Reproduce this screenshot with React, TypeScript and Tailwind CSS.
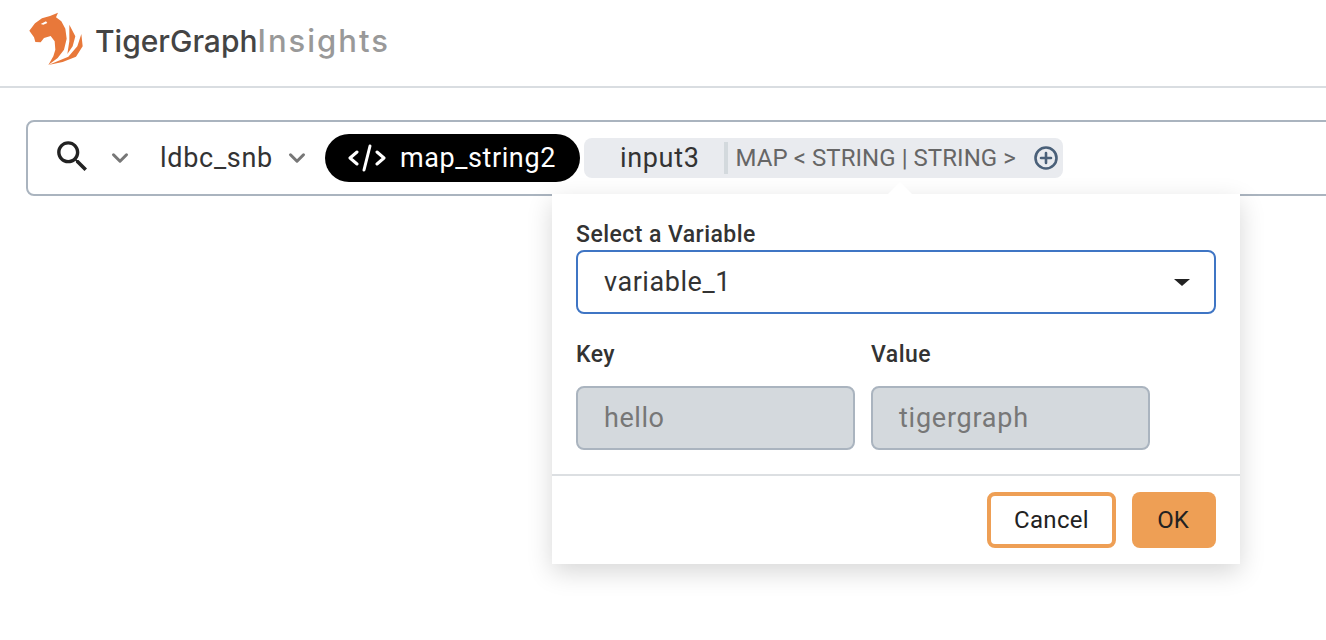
import React from 'react';
import { ChevronDown } from 'lucide-react';

const TigerLogo = () => (
  <svg width="56" height="54" viewBox="27 12 168 162" className="shrink-0">
    <path
      fill="#E8783A"
      d="M28 68 L45 46 L66 31 L90 24 L114 14 L108 28 L124 40 L136 62 L140 92 L132 125 L113 150 L85 171 L100 145 L106 125 L104 100 L92 84 L72 90 L62 103 L46 102 L42 88 Z"
    />
    <path fill="#E8783A" d="M148 50 L166 85 L158 115 L142 138 L148 100 Z" />
    <path fill="#E8783A" d="M184 78 L188 115 L168 146 L128 162 L85 171 L145 146 L172 115 Z" />
    <path fill="#fff" d="M62 48 L78 40 L82 45 L70 50 Z" />
  </svg>
);

const inputText = 'text-[27px] tracking-[0.55px]';

export default function App() {
  return (
    <div className="relative h-[640px] overflow-hidden bg-white font-['Roboto',sans-serif] text-[#222]">
      <header className="flex h-[88px] items-start border-b-2 border-[#d9dde1] pl-[29px] pt-[12px]">
        <TigerLogo />
        <div className="ml-[10px] mt-[9px] whitespace-nowrap font-['Inter',sans-serif] text-[30px] font-medium leading-[40px]">
          <span className="text-[#444]">TigerGraph</span>
          <span className="text-[31px] tracking-[2px] text-[#999]">Insights</span>
        </div>
      </header>

      <div className="ml-[26px] mt-[32px] flex h-[76px] w-[1340px] items-center rounded-[8px] border-2 border-[#aab4bf] pl-[24px]">
        <svg width="41" height="41" viewBox="0 0 24 24" fill="#222" className="mb-[3px] shrink-0">
          <path d="M15.5 14h-.79l-.28-.27C15.41 12.59 16 11.11 16 9.5 16 5.91 13.09 3 9.5 3S3 5.91 3 9.5 5.91 16 9.5 16c1.61 0 3.09-.59 4.23-1.57l.27.28v.79l5 4.99L20.49 19l-4.99-5zm-6 0C7.01 14 5 11.99 5 9.5S7.01 5 9.5 5 14 7.01 14 9.5 11.99 14 9.5 14z" />
        </svg>
        <ChevronDown size={26} strokeWidth={2.8} className="ml-[14px] shrink-0 text-[#777]" />
        <span className="ml-[27px] text-[27px] leading-none tracking-[0.7px] text-[#333]">ldbc_snb</span>
        <ChevronDown size={26} strokeWidth={2.8} className="ml-[11px] shrink-0 text-[#777]" />
        <div className="ml-[15px] flex h-[48px] w-[255px] shrink-0 items-center rounded-full bg-black pl-[23px] text-white">
          <svg width="38" height="28" viewBox="0 0 38 28" fill="none" stroke="#fff" strokeWidth="3" strokeLinecap="round" strokeLinejoin="round">
            <path d="M9 8 L2 14 L9 20" />
            <path d="M22 2 L16 26" />
            <path d="M29 8 L36 14 L29 20" />
          </svg>
          <span className="ml-[14px] text-[27px] leading-none tracking-[0.6px]">map_string2</span>
        </div>
        <div className="ml-[4px] flex h-[40px] w-[479px] shrink-0 items-center rounded-[8px] bg-[#e9ebef]">
          <span className="ml-[36px] text-[27px] leading-none tracking-[0.7px] text-[#333]">input3</span>
          <div className="ml-[24px] h-[32px] w-[4px] bg-[#d3d9dd]" />
          <span className="ml-[8px] whitespace-nowrap text-[24px] leading-none tracking-[0.05px] text-[#666]">MAP &lt; STRING | STRING &gt;</span>
          <svg width="26" height="26" viewBox="0 0 26 26" fill="none" stroke="#4a6079" strokeWidth="2.6" strokeLinecap="round" className="ml-[17px]">
            <circle cx="13" cy="13" r="10.5" />
            <path d="M13 8 V18 M8 13 H18" />
          </svg>
        </div>
      </div>

      {/* popover floats over the search bar */}
      <div className="absolute left-[552px] top-[194px] w-[688px] bg-white shadow-[0_8px_24px_rgba(0,0,0,0.16)]">
        <div className="absolute left-[336px] top-[-12px] h-0 w-0 border-x-[12px] border-b-[12px] border-x-transparent border-b-white" />
        <div className="px-[24px] pt-[26px]">
          <label className="block text-[23px] font-medium leading-[30px] tracking-[0.45px] text-[#333]">Select a Variable</label>
          <div className="flex h-[64px] w-[640px] items-center justify-between rounded-[8px] border-2 border-[#3f75c4] pl-[26px] pr-[24px]">
            <span className={`${inputText} text-[#333]`}>variable_1</span>
            <div className="h-0 w-0 border-x-[8px] border-t-[7px] border-x-transparent border-t-[#222]" />
          </div>
          <div className="mt-[26px] flex gap-[16px]">
            <div className="w-[279px]">
              <label className="block text-[23px] font-medium leading-[30px] tracking-[0.45px] text-[#333]">Key</label>
              <div className={`mt-[16px] flex h-[64px] items-center rounded-[8px] border-2 border-[#aab4bf] bg-[#d4d9dd] pl-[26px] text-[#777] ${inputText}`}>hello</div>
            </div>
            <div className="w-[279px]">
              <label className="block text-[23px] font-medium leading-[30px] tracking-[0.45px] text-[#333]">Value</label>
              <div className="mt-[16px] flex h-[64px] items-center rounded-[8px] border-2 border-[#aab4bf] bg-[#d4d9dd] pl-[26px] text-[27px] tracking-[0.75px] text-[#777]">tigergraph</div>
            </div>
          </div>
        </div>
        <div className="mt-[24px] flex h-[90px] items-start justify-end gap-[16px] border-t-2 border-[#dcdfe2] pr-[24px] pt-[16px]">
          <button className="h-[56px] w-[129px] rounded-[8px] border-4 border-[#ee9f55] bg-white text-[24px] tracking-[0.3px] text-[#222]">Cancel</button>
          <button className="h-[56px] w-[84px] rounded-[8px] bg-[#ee9f55] pr-[2px] text-[24px] text-[#222]">OK</button>
        </div>
      </div>
    </div>
  );
}
